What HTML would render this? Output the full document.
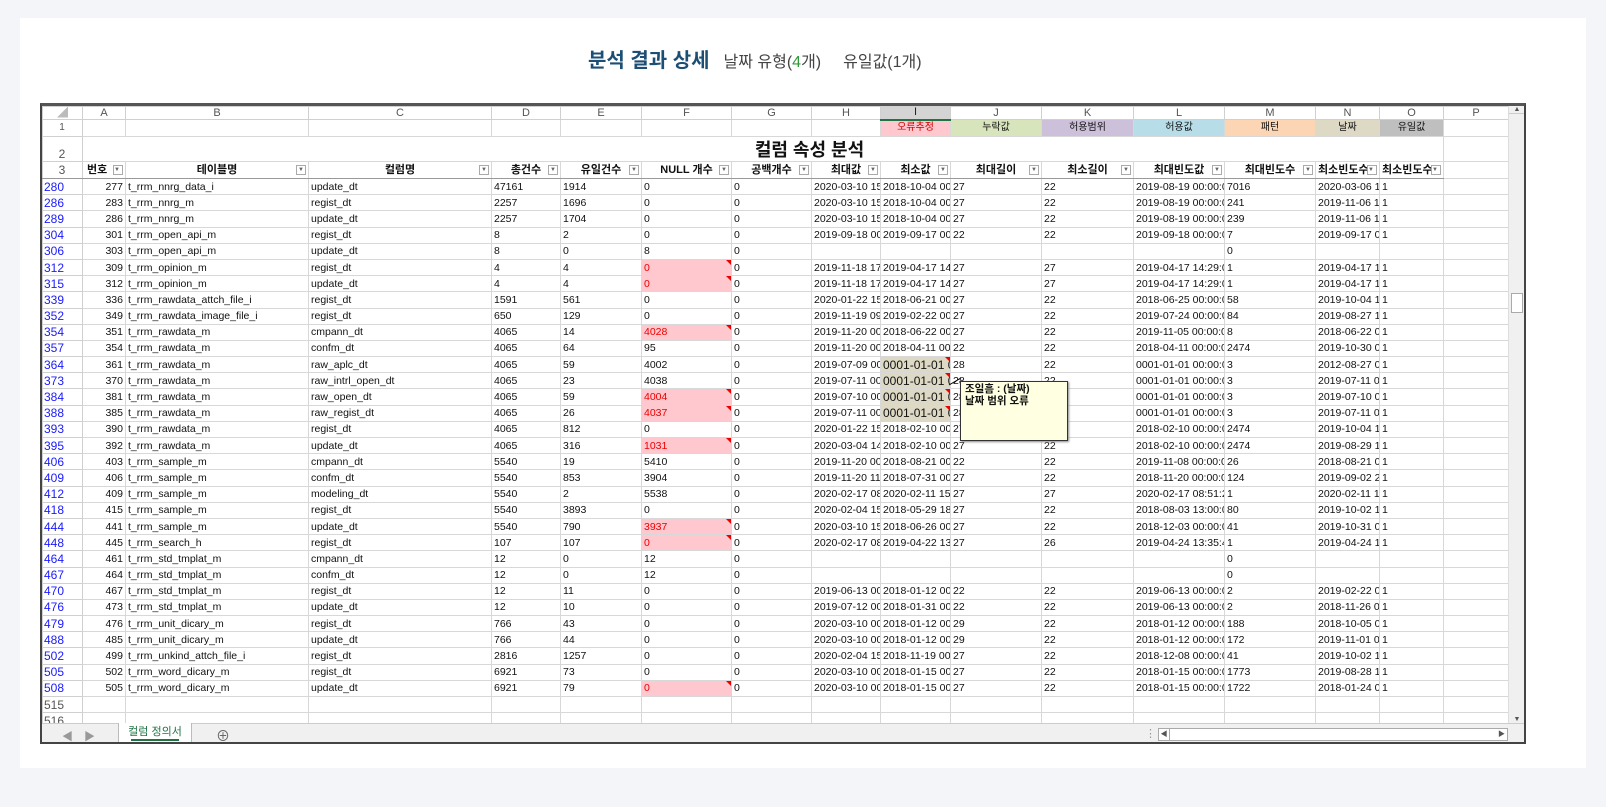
<!DOCTYPE html>
<html><head><meta charset="utf-8"><style>
*{box-sizing:border-box;margin:0;padding:0}
body{width:1606px;height:807px;background:#f3f5f8;font-family:"Liberation Sans","Noto Sans CJK KR",sans-serif;position:relative;overflow:hidden}
.card{position:absolute;left:20px;top:18px;width:1566px;height:750px;background:#fff}
.title{position:absolute;left:588px;top:44px;font-size:20px;font-weight:bold;color:#1d4f75;white-space:nowrap}
.title span{font-weight:normal;color:#444;font-size:16px;margin-left:14px}
.title b{color:#2e9a3a;font-weight:normal}
.frame{position:absolute;left:40px;top:103px;width:1486px;height:641px;border:2px solid #444;border-top:3px solid #555;background:#fff;overflow:hidden}
.grid{position:absolute;left:0;top:0;width:1466px;height:617px;overflow:hidden}
table{border-collapse:collapse;table-layout:fixed;width:1466px;font-size:10.5px;color:#111}
td{border:1px solid #d8d8d8;white-space:nowrap;overflow:hidden;padding:0 2px;height:16.2px;line-height:14px;font-family:"Liberation Sans","Noto Sans CJK KR",sans-serif}
td.h{background:#fff;color:#1a1aff;font-size:12px;text-align:left;padding-left:1px;border-color:#d0d0d0}
tr.ch td{height:13px;background:#fff;color:#555;text-align:center;font-size:11px;line-height:11px;border-color:#d0d0d0}
tr.ch td.sel{background:#d4d4d4;border-bottom:2px solid #217346;color:#222}
td.n{text-align:right}
td.r{background:#ffc7ce;color:#e00;position:relative}
td.t{background:#ddd9c4;font-size:12px;position:relative}
td.r:after,td.t:after{content:"";position:absolute;right:0;top:0;border-top:5px solid #e00;border-left:5px solid transparent}
tr.hd td{font-weight:bold;text-align:center;font-size:11px;border-bottom:1px solid #999;position:relative;height:17px}
tr.hd td i{position:absolute;right:2px;top:3px;width:10px;height:10px;border:1px solid #aaa;background:#fff;font-style:normal;font-size:6px;line-height:8px;color:#666;font-weight:normal}
.rh{color:#555!important}
.leg td{text-align:center;font-size:10px}
.vs{position:absolute;left:1466px;top:0;width:17px;height:617px;background:#f0f0f0;border-left:1px solid #ddd}
.vs .th{position:absolute;left:2px;top:187px;width:12px;height:20px;background:#fff;border:1px solid #aaa}
.tabs{position:absolute;left:0;top:617px;width:1483px;height:22px;background:#f0f0f0;border-top:1px solid #ccc;font-size:11px;color:#999}
.tab{position:absolute;left:76px;top:-1px;width:74px;height:21px;background:#fff;border:1px solid #bbb;border-top:none;color:#217346;text-align:center;line-height:18px;font-size:11px}
.tab:after{content:"";position:absolute;left:12px;right:12px;bottom:2px;border-bottom:2px solid #217346}
.hs{position:absolute;left:1116px;top:4px;width:350px;height:13px;border:1px solid #aaa;background:#fff}
.tip{position:absolute;left:918px;top:275px;width:108px;height:60px;background:#ffffe1;border:1px solid #333;font-size:10.5px;font-weight:bold;padding:1px 4px;line-height:12px;color:#111;box-shadow:1px 1px 2px #888}
</style></head><body>
<div class="card"></div>
<div class="title">분석 결과 상세<span>날짜 유형(<b>4</b>개)</span><span style="margin-left:22px">유일값(1개)</span></div>
<div class="frame">
<div class="grid">
<table>
<colgroup><col style="width:40px"><col style="width:43px"><col style="width:183px"><col style="width:183px"><col style="width:69px"><col style="width:81px"><col style="width:90px"><col style="width:80px"><col style="width:69px"><col style="width:70px"><col style="width:91px"><col style="width:92px"><col style="width:91px"><col style="width:91px"><col style="width:64px"><col style="width:64px"><col style="width:65px"></colgroup>
<tr class="ch"><td style="color:#bbb">◢</td><td>A</td><td>B</td><td>C</td><td>D</td><td>E</td><td>F</td><td>G</td><td>H</td><td class="sel">I</td><td>J</td><td>K</td><td>L</td><td>M</td><td>N</td><td>O</td><td>P</td></tr>
<tr class="leg" style="height:17px"><td class="h rh" style="text-align:center">1</td><td></td><td></td><td></td><td></td><td></td><td></td><td></td><td></td><td style="background:#ffc7ce;color:#c00">오류추정</td><td style="background:#d8e4bc">누락값</td><td style="background:#ccc0da">허용범위</td><td style="background:#b7dee8">허용값</td><td style="background:#fcd5b4">패턴</td><td style="background:#ddd9c4">날짜</td><td style="background:#bfbfbf">유일값</td><td></td></tr>
<tr style="height:25px"><td class="h rh" style="text-align:center;vertical-align:bottom;height:25px">2</td><td colspan="15" style="text-align:center;font-size:18px;font-weight:bold;padding-left:95px;height:25px;line-height:22px;vertical-align:bottom">컬럼 속성 분석</td><td></td></tr>
<tr class="hd"><td class="h rh" style="text-align:center;font-weight:normal;font-size:12px">3</td><td style="text-align:left;padding-left:4px">번호<i>▼</i></td><td>테이블명<i>▼</i></td><td>컬럼명<i>▼</i></td><td>총건수<i>▼</i></td><td>유일건수<i>▼</i></td><td>NULL 개수<i>▼</i></td><td>공백개수<i>▼</i></td><td>최대값<i>▼</i></td><td>최소값<i>▼</i></td><td>최대길이<i>▼</i></td><td>최소길이<i>▼</i></td><td>최대빈도값<i>▼</i></td><td>최대빈도수<i>▼</i></td><td style="text-align:left">최소빈도수<i>▼</i></td><td style="text-align:left">최소빈도수<i>▼</i></td><td style="border:none;border-left:1px solid #d8d8d8"></td></tr>
<tr><td class="h">280</td><td class="n">277</td><td>t_rrm_nnrg_data_i</td><td>update_dt</td><td>47161</td><td>1914</td><td>0</td><td>0</td><td>2020-03-10 15:</td><td>2018-10-04 00:</td><td>27</td><td>22</td><td>2019-08-19 00:00:0(</td><td>7016</td><td>2020-03-06 1:</td><td>1</td><td></td></tr>
<tr><td class="h">286</td><td class="n">283</td><td>t_rrm_nnrg_m</td><td>regist_dt</td><td>2257</td><td>1696</td><td>0</td><td>0</td><td>2020-03-10 15:</td><td>2018-10-04 00:</td><td>27</td><td>22</td><td>2019-08-19 00:00:0(</td><td>241</td><td>2019-11-06 1:</td><td>1</td><td></td></tr>
<tr><td class="h">289</td><td class="n">286</td><td>t_rrm_nnrg_m</td><td>update_dt</td><td>2257</td><td>1704</td><td>0</td><td>0</td><td>2020-03-10 15:</td><td>2018-10-04 00:</td><td>27</td><td>22</td><td>2019-08-19 00:00:0(</td><td>239</td><td>2019-11-06 1:</td><td>1</td><td></td></tr>
<tr><td class="h">304</td><td class="n">301</td><td>t_rrm_open_api_m</td><td>regist_dt</td><td>8</td><td>2</td><td>0</td><td>0</td><td>2019-09-18 00:</td><td>2019-09-17 00:</td><td>22</td><td>22</td><td>2019-09-18 00:00:0(</td><td>7</td><td>2019-09-17 0:</td><td>1</td><td></td></tr>
<tr><td class="h">306</td><td class="n">303</td><td>t_rrm_open_api_m</td><td>update_dt</td><td>8</td><td>0</td><td>8</td><td>0</td><td></td><td></td><td></td><td></td><td></td><td>0</td><td></td><td></td><td></td></tr>
<tr><td class="h">312</td><td class="n">309</td><td>t_rrm_opinion_m</td><td>regist_dt</td><td>4</td><td>4</td><td class="r">0</td><td>0</td><td>2019-11-18 17:</td><td>2019-04-17 14:</td><td>27</td><td>27</td><td>2019-04-17 14:29:0</td><td>1</td><td>2019-04-17 1:</td><td>1</td><td></td></tr>
<tr><td class="h">315</td><td class="n">312</td><td>t_rrm_opinion_m</td><td>update_dt</td><td>4</td><td>4</td><td class="r">0</td><td>0</td><td>2019-11-18 17:</td><td>2019-04-17 14:</td><td>27</td><td>27</td><td>2019-04-17 14:29:0</td><td>1</td><td>2019-04-17 1:</td><td>1</td><td></td></tr>
<tr><td class="h">339</td><td class="n">336</td><td>t_rrm_rawdata_attch_file_i</td><td>regist_dt</td><td>1591</td><td>561</td><td>0</td><td>0</td><td>2020-01-22 15:</td><td>2018-06-21 00:</td><td>27</td><td>22</td><td>2018-06-25 00:00:0(</td><td>58</td><td>2019-10-04 1:</td><td>1</td><td></td></tr>
<tr><td class="h">352</td><td class="n">349</td><td>t_rrm_rawdata_image_file_i</td><td>regist_dt</td><td>650</td><td>129</td><td>0</td><td>0</td><td>2019-11-19 09:</td><td>2019-02-22 00:</td><td>27</td><td>22</td><td>2019-07-24 00:00:0(</td><td>84</td><td>2019-08-27 1:</td><td>1</td><td></td></tr>
<tr><td class="h">354</td><td class="n">351</td><td>t_rrm_rawdata_m</td><td>cmpann_dt</td><td>4065</td><td>14</td><td class="r">4028</td><td>0</td><td>2019-11-20 00:</td><td>2018-06-22 00:</td><td>27</td><td>22</td><td>2019-11-05 00:00:0(</td><td>8</td><td>2018-06-22 0:</td><td>1</td><td></td></tr>
<tr><td class="h">357</td><td class="n">354</td><td>t_rrm_rawdata_m</td><td>confm_dt</td><td>4065</td><td>64</td><td>95</td><td>0</td><td>2019-11-20 00:</td><td>2018-04-11 00:</td><td>22</td><td>22</td><td>2018-04-11 00:00:0(</td><td>2474</td><td>2019-10-30 0:</td><td>1</td><td></td></tr>
<tr><td class="h">364</td><td class="n">361</td><td>t_rrm_rawdata_m</td><td>raw_aplc_dt</td><td>4065</td><td>59</td><td>4002</td><td>0</td><td>2019-07-09 00:</td><td class="t">0001-01-01 00</td><td>28</td><td>22</td><td>0001-01-01 00:00:0(</td><td>3</td><td>2012-08-27 0:</td><td>1</td><td></td></tr>
<tr><td class="h">373</td><td class="n">370</td><td>t_rrm_rawdata_m</td><td>raw_intrl_open_dt</td><td>4065</td><td>23</td><td>4038</td><td>0</td><td>2019-07-11 00:</td><td class="t">0001-01-01 00</td><td>28</td><td>22</td><td>0001-01-01 00:00:0(</td><td>3</td><td>2019-07-11 0:</td><td>1</td><td></td></tr>
<tr><td class="h">384</td><td class="n">381</td><td>t_rrm_rawdata_m</td><td>raw_open_dt</td><td>4065</td><td>59</td><td class="r">4004</td><td>0</td><td>2019-07-10 00:</td><td class="t">0001-01-01 00</td><td>28</td><td>22</td><td>0001-01-01 00:00:0(</td><td>3</td><td>2019-07-10 0:</td><td>1</td><td></td></tr>
<tr><td class="h">388</td><td class="n">385</td><td>t_rrm_rawdata_m</td><td>raw_regist_dt</td><td>4065</td><td>26</td><td class="r">4037</td><td>0</td><td>2019-07-11 00:</td><td class="t">0001-01-01 00</td><td>28</td><td>22</td><td>0001-01-01 00:00:0(</td><td>3</td><td>2019-07-11 0:</td><td>1</td><td></td></tr>
<tr><td class="h">393</td><td class="n">390</td><td>t_rrm_rawdata_m</td><td>regist_dt</td><td>4065</td><td>812</td><td>0</td><td>0</td><td>2020-01-22 15:</td><td>2018-02-10 00:</td><td>27</td><td>22</td><td>2018-02-10 00:00:0(</td><td>2474</td><td>2019-10-04 1:</td><td>1</td><td></td></tr>
<tr><td class="h">395</td><td class="n">392</td><td>t_rrm_rawdata_m</td><td>update_dt</td><td>4065</td><td>316</td><td class="r">1031</td><td>0</td><td>2020-03-04 14:</td><td>2018-02-10 00:</td><td>27</td><td>22</td><td>2018-02-10 00:00:0(</td><td>2474</td><td>2019-08-29 1:</td><td>1</td><td></td></tr>
<tr><td class="h">406</td><td class="n">403</td><td>t_rrm_sample_m</td><td>cmpann_dt</td><td>5540</td><td>19</td><td>5410</td><td>0</td><td>2019-11-20 00:</td><td>2018-08-21 00:</td><td>22</td><td>22</td><td>2019-11-08 00:00:0(</td><td>26</td><td>2018-08-21 0:</td><td>1</td><td></td></tr>
<tr><td class="h">409</td><td class="n">406</td><td>t_rrm_sample_m</td><td>confm_dt</td><td>5540</td><td>853</td><td>3904</td><td>0</td><td>2019-11-20 11:</td><td>2018-07-31 00:</td><td>27</td><td>22</td><td>2018-11-20 00:00:0(</td><td>124</td><td>2019-09-02 2:</td><td>1</td><td></td></tr>
<tr><td class="h">412</td><td class="n">409</td><td>t_rrm_sample_m</td><td>modeling_dt</td><td>5540</td><td>2</td><td>5538</td><td>0</td><td>2020-02-17 08:</td><td>2020-02-11 15:</td><td>27</td><td>27</td><td>2020-02-17 08:51:2</td><td>1</td><td>2020-02-11 1:</td><td>1</td><td></td></tr>
<tr><td class="h">418</td><td class="n">415</td><td>t_rrm_sample_m</td><td>regist_dt</td><td>5540</td><td>3893</td><td>0</td><td>0</td><td>2020-02-04 15:</td><td>2018-05-29 18:</td><td>27</td><td>22</td><td>2018-08-03 13:00:0(</td><td>80</td><td>2019-10-02 1:</td><td>1</td><td></td></tr>
<tr><td class="h">444</td><td class="n">441</td><td>t_rrm_sample_m</td><td>update_dt</td><td>5540</td><td>790</td><td class="r">3937</td><td>0</td><td>2020-03-10 15:</td><td>2018-06-26 00:</td><td>27</td><td>22</td><td>2018-12-03 00:00:0(</td><td>41</td><td>2019-10-31 0:</td><td>1</td><td></td></tr>
<tr><td class="h">448</td><td class="n">445</td><td>t_rrm_search_h</td><td>regist_dt</td><td>107</td><td>107</td><td class="r">0</td><td>0</td><td>2020-02-17 08:</td><td>2019-04-22 13:</td><td>27</td><td>26</td><td>2019-04-24 13:35:4</td><td>1</td><td>2019-04-24 1:</td><td>1</td><td></td></tr>
<tr><td class="h">464</td><td class="n">461</td><td>t_rrm_std_tmplat_m</td><td>cmpann_dt</td><td>12</td><td>0</td><td>12</td><td>0</td><td></td><td></td><td></td><td></td><td></td><td>0</td><td></td><td></td><td></td></tr>
<tr><td class="h">467</td><td class="n">464</td><td>t_rrm_std_tmplat_m</td><td>confm_dt</td><td>12</td><td>0</td><td>12</td><td>0</td><td></td><td></td><td></td><td></td><td></td><td>0</td><td></td><td></td><td></td></tr>
<tr><td class="h">470</td><td class="n">467</td><td>t_rrm_std_tmplat_m</td><td>regist_dt</td><td>12</td><td>11</td><td>0</td><td>0</td><td>2019-06-13 00:</td><td>2018-01-12 00:</td><td>22</td><td>22</td><td>2019-06-13 00:00:0(</td><td>2</td><td>2019-02-22 0:</td><td>1</td><td></td></tr>
<tr><td class="h">476</td><td class="n">473</td><td>t_rrm_std_tmplat_m</td><td>update_dt</td><td>12</td><td>10</td><td>0</td><td>0</td><td>2019-07-12 00:</td><td>2018-01-31 00:</td><td>22</td><td>22</td><td>2019-06-13 00:00:0(</td><td>2</td><td>2018-11-26 0:</td><td>1</td><td></td></tr>
<tr><td class="h">479</td><td class="n">476</td><td>t_rrm_unit_dicary_m</td><td>regist_dt</td><td>766</td><td>43</td><td>0</td><td>0</td><td>2020-03-10 00:</td><td>2018-01-12 00:</td><td>29</td><td>22</td><td>2018-01-12 00:00:0(</td><td>188</td><td>2018-10-05 0:</td><td>1</td><td></td></tr>
<tr><td class="h">488</td><td class="n">485</td><td>t_rrm_unit_dicary_m</td><td>update_dt</td><td>766</td><td>44</td><td>0</td><td>0</td><td>2020-03-10 00:</td><td>2018-01-12 00:</td><td>29</td><td>22</td><td>2018-01-12 00:00:0(</td><td>172</td><td>2019-11-01 0:</td><td>1</td><td></td></tr>
<tr><td class="h">502</td><td class="n">499</td><td>t_rrm_unkind_attch_file_i</td><td>regist_dt</td><td>2816</td><td>1257</td><td>0</td><td>0</td><td>2020-02-04 15:</td><td>2018-11-19 00:</td><td>27</td><td>22</td><td>2018-12-08 00:00:0(</td><td>41</td><td>2019-10-02 1:</td><td>1</td><td></td></tr>
<tr><td class="h">505</td><td class="n">502</td><td>t_rrm_word_dicary_m</td><td>regist_dt</td><td>6921</td><td>73</td><td>0</td><td>0</td><td>2020-03-10 00:</td><td>2018-01-15 00:</td><td>27</td><td>22</td><td>2018-01-15 00:00:0(</td><td>1773</td><td>2019-08-28 1:</td><td>1</td><td></td></tr>
<tr><td class="h">508</td><td class="n">505</td><td>t_rrm_word_dicary_m</td><td>update_dt</td><td>6921</td><td>79</td><td class="r">0</td><td>0</td><td>2020-03-10 00:</td><td>2018-01-15 00:</td><td>27</td><td>22</td><td>2018-01-15 00:00:0(</td><td>1722</td><td>2018-01-24 0:</td><td>1</td><td></td></tr>
<tr><td class="h rh">515</td><td></td><td></td><td></td><td></td><td></td><td></td><td></td><td></td><td></td><td></td><td></td><td></td><td></td><td></td><td></td><td></td></tr>
<tr><td class="h rh">516</td><td></td><td></td><td></td><td></td><td></td><td></td><td></td><td></td><td></td><td></td><td></td><td></td><td></td><td></td><td></td><td></td></tr>
</table>
<div class="tip">조일흠 : (날짜)<br>날짜 범위 오류</div>
<svg style="position:absolute;left:906px;top:270px" width="14" height="10"><line x1="1" y1="9" x2="13" y2="2" stroke="#000" stroke-width="1"/></svg>
</div>
<div class="vs"><div style="text-align:center;font-size:7px;color:#555;border-bottom:1px solid #ccc">▲</div><div class="th"></div><div style="position:absolute;bottom:0;width:100%;text-align:center;font-size:7px;color:#555">▼</div></div>
<div class="tabs"><span style="position:absolute;left:20px;top:4px">◀</span><span style="position:absolute;left:42px;top:4px">▶</span><div class="tab">컬럼 정의서</div><span style="position:absolute;left:174px;top:2px;font-size:14px;color:#666">⊕</span><span style="position:absolute;left:1103px;top:3px">⋮</span><div class="hs"><div style="width:11px;height:11px;border-right:1px solid #aaa;font-size:7px;text-align:center;color:#555">◀</div></div><span style="position:absolute;left:1456px;top:5px;font-size:7px;color:#555">▶</span></div>
</div>
</body></html>
